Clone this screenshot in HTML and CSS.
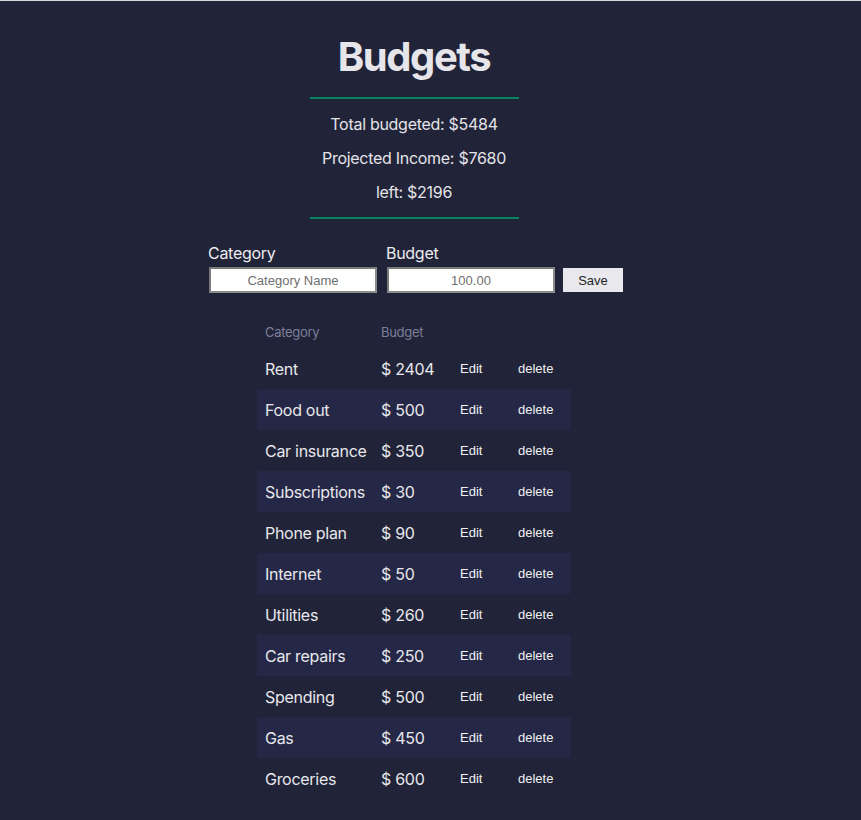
FILE: index.html
```html
<!DOCTYPE html>
<html lang="en">
<head>
<meta charset="utf-8">
<title>Budgets</title>
<link rel="stylesheet" href="styles.css">
</head>
<body>
<div class="page">
  <h1 class="title">Budgets</h1>
  <div class="rule"></div>
  <p class="stat">Total budgeted: $5484</p>
  <p class="stat">Projected Income: $7680</p>
  <p class="stat">left: $2196</p>
  <div class="rule"></div>

  <form class="form">
    <div class="field">
      <label class="label">Category</label>
      <input class="input" type="text" placeholder="Category Name">
    </div>
    <div class="field">
      <label class="label">Budget</label>
      <input class="input" type="text" placeholder="100.00">
    </div>
    <button class="save" type="button">Save</button>
  </form>

  <table class="table">
    <colgroup>
      <col class="c1"><col class="c2"><col class="c3"><col class="c4">
    </colgroup>
    <thead>
      <tr><th>Category</th><th>Budget</th><th></th><th></th></tr>
    </thead>
    <tbody>
      <tr><td>Rent</td><td>$ 2404</td><td><button class="act">Edit</button></td><td><button class="act">delete</button></td></tr>
      <tr><td>Food out</td><td>$ 500</td><td><button class="act">Edit</button></td><td><button class="act">delete</button></td></tr>
      <tr><td>Car insurance</td><td>$ 350</td><td><button class="act">Edit</button></td><td><button class="act">delete</button></td></tr>
      <tr><td>Subscriptions</td><td>$ 30</td><td><button class="act">Edit</button></td><td><button class="act">delete</button></td></tr>
      <tr><td>Phone plan</td><td>$ 90</td><td><button class="act">Edit</button></td><td><button class="act">delete</button></td></tr>
      <tr><td>Internet</td><td>$ 50</td><td><button class="act">Edit</button></td><td><button class="act">delete</button></td></tr>
      <tr><td>Utilities</td><td>$ 260</td><td><button class="act">Edit</button></td><td><button class="act">delete</button></td></tr>
      <tr><td>Car repairs</td><td>$ 250</td><td><button class="act">Edit</button></td><td><button class="act">delete</button></td></tr>
      <tr><td>Spending</td><td>$ 500</td><td><button class="act">Edit</button></td><td><button class="act">delete</button></td></tr>
      <tr><td>Gas</td><td>$ 450</td><td><button class="act">Edit</button></td><td><button class="act">delete</button></td></tr>
      <tr><td>Groceries</td><td>$ 600</td><td><button class="act">Edit</button></td><td><button class="act">delete</button></td></tr>
    </tbody>
  </table>
</div>
</body>
</html>
```
FILE: styles.css
```css
html {
  background: #212338;
  border-top: 1px solid #d6d6d6;
  min-height: 100%;
}
body {
  margin: 0;
  background: #212338;
  color: #e4e4e8;
  font-family: Inter, "Noto Sans", sans-serif;
  letter-spacing: -0.018em;
}
.page {
  width: 828px;
  padding-top: 32px;
  display: flex;
  flex-direction: column;
  align-items: center;
}
.title {
  margin: 0;
  font-size: 40px;
  line-height: 48px;
  font-weight: 700;
  letter-spacing: -0.035em;
  color: #e6e6ea;
}
.rule {
  width: 209px;
  height: 2px;
  background: #07835d;
  margin-top: 16px;
}
.stat {
  margin: 16px 0 0;
  font-size: 16px;
  line-height: 18px;
  color: #e4e4e8;
}
.form {
  margin-top: 24px;
  display: flex;
  align-items: flex-end;
  padding-left: 4px;
}
.field {
  display: flex;
  flex-direction: column;
  width: 168px;
  margin-right: 10px;
}
.field + .field {
  margin-right: 8px;
}
.label {
  font-size: 16px;
  line-height: 20px;
  margin: 0 0 4px -1px;
  color: #ececf0;
}
.input {
  box-sizing: border-box;
  width: 168px;
  height: 26px;
  margin: 0;
  border: 2px solid #8c8c8c;
  border-top-color: #7a7a7a;
  border-left-color: #7a7a7a;
  background: #fff;
  text-align: center;
  font-family: "Liberation Sans", Arial, sans-serif;
  letter-spacing: 0;
  font-size: 13px;
  padding: 0 4px;
}
.input::placeholder {
  color: #6f6f6f;
}
.save {
  width: 60px;
  height: 24px;
  margin-bottom: 1px;
  border: none;
  background: #e9e9ed;
  color: #1e1e1e;
  font-family: "Liberation Sans", Arial, sans-serif;
  letter-spacing: 0;
  font-size: 13px;
  padding: 0;
}
.table {
  margin-top: 23px;
  border-collapse: collapse;
  table-layout: fixed;
  width: 314px;
}
.c1 { width: 116px; }
.c2 { width: 69px; }
.c3 { width: 58px; }
.c4 { width: 71px; }
.table th {
  height: 32px;
  padding: 0 8px;
  text-align: left;
  font-weight: 400;
  font-size: 13px;
  color: #7c7e9a;
}
.table td {
  height: 41px;
  padding: 0 8px;
  font-size: 16px;
  color: #e8e8ec;
  white-space: nowrap;
  vertical-align: middle;
}
.table tbody tr:nth-child(even) td {
  background: #252746;
}
.act {
  display: block;
  height: 16px;
  line-height: 14px;
  background: none;
  border: none;
  padding: 0 10px;
  margin: 0;
  color: #f0f0f3;
  font-family: "Liberation Sans", Arial, sans-serif;
  letter-spacing: 0;
  font-size: 13px;
}
```
